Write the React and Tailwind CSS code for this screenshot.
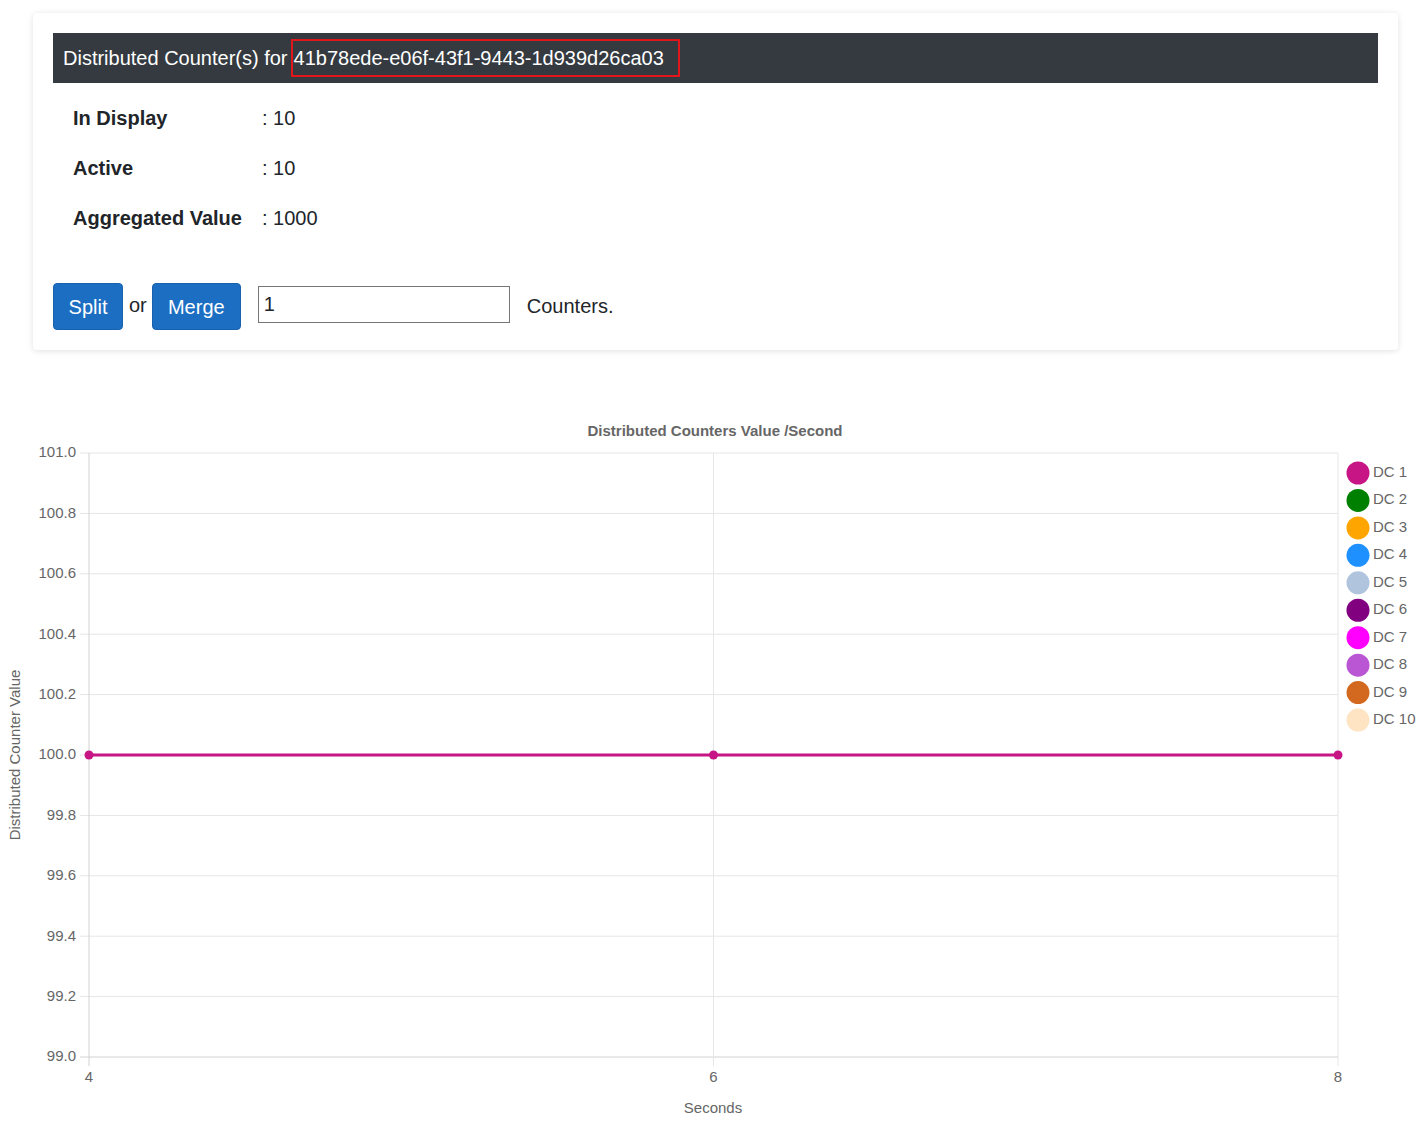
import React from 'react';

const legend = [
    { name: 'DC 1', color: '#c71585' },
    { name: 'DC 2', color: '#008000' },
    { name: 'DC 3', color: '#ffa500' },
    { name: 'DC 4', color: '#1e90ff' },
    { name: 'DC 5', color: '#b0c4de' },
    { name: 'DC 6', color: '#800080' },
    { name: 'DC 7', color: '#ff00ff' },
    { name: 'DC 8', color: '#ba55d3' },
    { name: 'DC 9', color: '#d2691e' },
    { name: 'DC 10', color: '#ffe4c4' }
];

const stats = [
    { label: 'In Display', value: ': 10' },
    { label: 'Active', value: ': 10' },
    { label: 'Aggregated Value', value: ': 1000' }
];

// chart geometry (svg coords, svg starts at page y=400)
const OY = 400;
const left = 89;
const right = 1338;
const top = 453 - OY;
const bottom = 1057 - OY;
const yTicks = ['101.0', '100.8', '100.6', '100.4', '100.2', '100.0', '99.8', '99.6', '99.4', '99.2', '99.0'];
const xTicks = [
    { label: '4', x: 89 },
    { label: '6', x: 713.5 },
    { label: '8', x: 1338 }
];

const Chart = () => {
    const step = (bottom - top) / 10;
    const lineY = top + step * 5;

    return (
        <svg width="1425" height="725" className="block" style={{ fontFamily: '"Liberation Sans", Arial, sans-serif' }}>
            <text x="715" y={432 - OY} textAnchor="middle" dominantBaseline="middle" fontSize="15" fontWeight="bold" fill="#666">
                Distributed Counters Value /Second
            </text>

            {yTicks.map((t, i) => {
                const y = top + step * i;
                return (
                    <g key={t}>
                        <line x1="80" x2={right} y1={y} y2={y} stroke={i === 10 ? '#d2d2d2' : '#e6e6e6'} strokeWidth="1" />
                        <text x="76" y={y + 0.5} textAnchor="end" dominantBaseline="middle" fontSize="15" fill="#666">{t}</text>
                    </g>
                );
            })}

            {xTicks.map((t, i) => (
                <g key={t.label}>
                    <line x1={t.x} x2={t.x} y1={top} y2={bottom + 9} stroke={i === 0 ? '#d2d2d2' : '#e6e6e6'} strokeWidth="1" />
                    <text x={t.x} y={1078 - OY} textAnchor="middle" dominantBaseline="middle" fontSize="15" fill="#666">{t.label}</text>
                </g>
            ))}

            <text x="713" y={1109 - OY} textAnchor="middle" dominantBaseline="middle" fontSize="15" fill="#666">Seconds</text>
            <text x="16" y={755 - OY} textAnchor="middle" dominantBaseline="middle" fontSize="15" fill="#666" transform={`rotate(-90 16 ${755 - OY})`}>
                Distributed Counter Value
            </text>

            <line x1={left} x2={right} y1={lineY} y2={lineY} stroke="#c71585" strokeWidth="3" />
            {xTicks.map(t => (
                <circle key={t.label} cx={t.x} cy={lineY} r="4.5" fill="#c71585" />
            ))}

            {legend.map((d, i) => {
                const cy = 473 - OY + i * 27.45;
                return (
                    <g key={d.name}>
                        <circle cx="1358" cy={cy} r="11.5" fill={d.color} />
                        <text x="1373" y={cy} dominantBaseline="middle" fontSize="15" fill="#666">{d.name}</text>
                    </g>
                );
            })}
        </svg>
    );
};

const App = () => {
    return (
        <div className="min-h-screen bg-white text-[#212529]" style={{ fontFamily: '"Liberation Sans", Arial, sans-serif' }}>
            <div className="pt-[13px] pl-[33px] pr-[27px]">
                <div className="bg-white rounded-[4px] shadow-[0_1px_6px_rgba(0,0,0,0.12)] p-5">
                    <div className="bg-[#343a40] h-[50px] flex items-center pl-[10px] text-white text-[20px]">
                        <span>Distributed Counter(s) for</span>
                        <span className="ml-[3px] border-2 border-[#e0161b] h-[38px] w-[389px] flex items-center pl-px">
                            41b78ede-e06f-43f1-9443-1d939d26ca03
                        </span>
                    </div>

                    <div className="mt-[10px]">
                        {stats.map(s => (
                            <div key={s.label} className="h-[50px] flex items-center text-[20px]">
                                <div className="w-[209px] pl-5 font-bold">{s.label}</div>
                                <div>{s.value}</div>
                            </div>
                        ))}
                    </div>

                    <div className="mt-10 flex items-center text-[20px]">
                        <button className="h-[47px] w-[70px] bg-[#1b6ec2] border border-[#1861ac] rounded-[4px] text-white">
                            Split
                        </button>
                        <span className="ml-[6px] mr-[5px] -mt-[3px]">or</span>
                        <button className="h-[47px] w-[89px] bg-[#1b6ec2] border border-[#1861ac] rounded-[4px] text-white">
                            Merge
                        </button>
                        <input
                            type="text"
                            defaultValue="1"
                            className="ml-[17px] mb-[4px] w-[252px] h-[37px] border border-[#767676] px-[5px] text-[20px] outline-none"
                        />
                        <span className="ml-[17px] -mt-[2px]">Counters.</span>
                    </div>
                </div>
            </div>

            <div className="mt-[50px]">
                <Chart />
            </div>
        </div>
    );
};

export default App;
